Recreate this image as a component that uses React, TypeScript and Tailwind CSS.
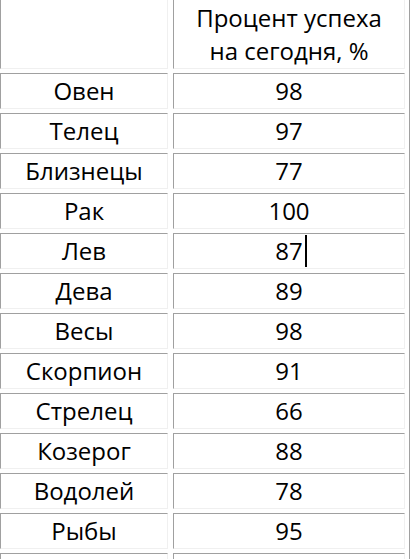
const rows: [string, string][] = [
  ["Овен", "98"],
  ["Телец", "97"],
  ["Близнецы", "77"],
  ["Рак", "100"],
  ["Лев", "87"],
  ["Дева", "89"],
  ["Весы", "98"],
  ["Скорпион", "91"],
  ["Стрелец", "66"],
  ["Козерог", "88"],
  ["Водолей", "78"],
  ["Рыбы", "95"],
];

const cell =
  "border-t border-l border-b border-r border-t-[#a0a0a0] border-l-[#a0a0a0] border-b-[#f0f0f0] border-r-[#f0f0f0] flex items-center justify-center";

export default function App() {
  return (
    <div className="w-[411px] h-[559px] overflow-hidden bg-white text-black font-['Open_Sans',sans-serif] text-[24px]">
      <div className="w-[410px] pr-[4px] border-r border-[#a0a0a0] flex flex-col gap-[4px]">
        {/* header, top edge is cut off */}
        <div className="flex gap-[5px] h-[69px]">
          <div className="w-[168px] border-l border-b border-r border-l-[#a0a0a0] border-b-[#f0f0f0] border-r-[#f0f0f0]" />
          <div className="w-[232px] border-l border-b border-r border-l-[#a0a0a0] border-b-[#f0f0f0] border-r-[#f0f0f0] pt-[1px] flex flex-col items-center">
            <div className="h-[33px] flex items-center">Процент успеха</div>
            <div className="h-[33px] flex items-center">на сегодня, %</div>
          </div>
        </div>

        {rows.map(([sign, pct]) => (
          <div key={sign} className="flex gap-[5px] h-[36px]">
            <div className={`w-[168px] ${cell}`}>{sign}</div>
            <div className={`w-[232px] ${cell}`}>
              <span className="relative">
                {pct}
                {sign === "Лев" && (
                  <span className="absolute left-full ml-[2px] top-1/2 -translate-y-1/2 w-[2px] h-[32px] bg-black" />
                )}
              </span>
            </div>
          </div>
        ))}

        <div className="flex gap-[5px] h-[36px]">
          <div className={`w-[168px] ${cell}`} />
          <div className={`w-[232px] ${cell}`} />
        </div>
      </div>
    </div>
  );
}
